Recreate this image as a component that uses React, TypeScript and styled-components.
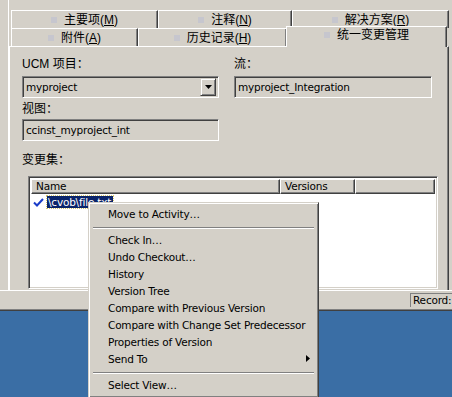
import React from "react";
import styled, { createGlobalStyle, css } from "styled-components";

const GlobalStyle = createGlobalStyle`
  html, body { margin: 0; padding: 0; }
  body {
    width: 452px;
    height: 397px;
    overflow: hidden;
    background: #3a6ea5;
    font-family: "Liberation Sans", "Noto Sans CJK SC", sans-serif;
    font-size: 12px;
    color: #000;
  }
`;

const Screen = styled.div`
  position: relative;
  width: 452px;
  height: 397px;
  overflow: hidden;
  background: #3a6ea5;
`;

const AppWindow = styled.div`
  height: 311px;
  box-sizing: border-box;
  background: #d4d0c8;
  border-bottom: 1px solid #404040;
  box-shadow: inset 0 -1px 0 #808080;
  display: flex;
  flex-direction: column;
`;

const Workspace = styled.div`
  height: 290px;
  display: flex;
  padding-left: 8px;
`;

const TabControl = styled.div`
  flex: 1;
  display: flex;
  flex-direction: column;
  border-left: 1px solid #ffffff;
  padding-top: 10px;
`;

const TabRow = styled.div<{ $front?: boolean }>`
  display: flex;
  height: 18px;
  padding-left: 2px;
  position: relative;
  z-index: ${(p) => (p.$front ? 2 : 1)};
`;

const Tab = styled.div<{ $w: number; $selected?: boolean }>`
  width: ${(p) => p.$w}px;
  flex: none;
  box-sizing: border-box;
  display: flex;
  align-items: center;
  justify-content: center;
  gap: 7px;
  background: #d4d0c8;
  border-top: 1px solid #ffffff;
  border-left: 1px solid #ffffff;
  border-right: 1px solid #404040;
  box-shadow: inset -1px 0 0 #808080;
  font-family: "Liberation Sans", "Noto Sans CJK SC", sans-serif;
  font-size: 12px;
  line-height: 14px;
  padding-top: 1px;
  ${(p) =>
    p.$selected &&
    css`
      height: 21px;
      margin-top: -2px;
      margin-left: -1px;
      margin-right: -2px;
      padding-top: 0;
      padding-bottom: 4px;
      position: relative;
      z-index: 3;
    `}
`;

const TabIcon = styled.span`
  width: 6px;
  height: 6px;
  background: #c6c6ce;
  flex: none;
`;

const Key = styled.u`
  text-decoration: underline;
  text-underline-offset: 1px;
`;

const TabPage = styled.div`
  flex: 1;
  display: flex;
  flex-direction: column;
  margin-right: 3px;
  border-top: 1px solid #ffffff;
  border-left: 1px solid #ffffff;
  border-right: 1px solid #404040;
  box-shadow: inset -1px 0 0 #808080;
  padding: 10px 0 0 12px;
  position: relative;
  z-index: 1;
`;

const FieldGrid = styled.div`
  display: grid;
  grid-template-columns: 197px 198px;
  column-gap: 15px;
`;

const Field = styled.div<{ $gap?: number }>`
  display: flex;
  flex-direction: column;
  margin-bottom: ${(p) => p.$gap ?? 0}px;
`;

const Label = styled.div<{ $mb?: number; $mt?: number }>`
  font-family: "Liberation Sans", "Noto Sans CJK SC", sans-serif;
  font-size: 12px;
  line-height: 14px;
  height: 14px;
  margin-top: ${(p) => p.$mt ?? 0}px;
  margin-bottom: ${(p) => p.$mb ?? 5}px;
`;

const sunken = css`
  border-top: 1px solid #808080;
  border-left: 1px solid #808080;
  border-bottom: 1px solid #ffffff;
  border-right: 1px solid #ffffff;
  box-shadow: inset 1px 1px 0 #404040, inset -1px -1px 0 #d4d0c8;
`;

const TextBox = styled.div`
  ${sunken};
  height: 22px;
  box-sizing: border-box;
  display: flex;
  align-items: center;
  padding-left: 3px;
  background: #d4d0c8;
  font-family: "DejaVu Sans", sans-serif;
  font-size: 10.5px;
  letter-spacing: -0.2px;
`;

const ComboBox = styled(TextBox)`
  padding-right: 2px;
  justify-content: space-between;
`;

const DropButton = styled.div`
  width: 16px;
  height: 18px;
  box-sizing: border-box;
  background: #d4d0c8;
  border-top: 1px solid #d4d0c8;
  border-left: 1px solid #d4d0c8;
  border-right: 1px solid #404040;
  border-bottom: 1px solid #404040;
  box-shadow: inset 1px 1px 0 #ffffff, inset -1px -1px 0 #808080;
  display: flex;
  align-items: center;
  justify-content: center;
`;

const ListView = styled.div`
  ${sunken};
  margin-top: 9px;
  margin-left: 6px;
  width: 410px;
  height: 113px;
  box-sizing: border-box;
  background: #ffffff;
  display: flex;
  flex-direction: column;
  padding: 2px;
`;

const HeaderRow = styled.div`
  display: flex;
  height: 15px;
  flex: none;
`;

const HeaderCell = styled.div<{ $w?: number }>`
  ${(p) => (p.$w ? css`width: ${p.$w}px; flex: none;` : css`flex: 1;`)}
  box-sizing: border-box;
  background: #d4d0c8;
  border-top: 1px solid #ffffff;
  border-left: 1px solid #ffffff;
  border-right: 1px solid #404040;
  border-bottom: 1px solid #404040;
  box-shadow: inset -1px -1px 0 #808080;
  font-family: "DejaVu Sans", sans-serif;
  font-size: 10.5px;
  letter-spacing: -0.2px;
  line-height: 12px;
  padding-left: 4px;
  white-space: nowrap;
  overflow: hidden;
`;

const ListRow = styled.div`
  display: flex;
  align-items: center;
  height: 14px;
  padding-left: 2px;
  margin-top: 1px;
  gap: 3px;
`;

const SelectedText = styled.span`
  background: #0a246a;
  color: #ffffff;
  font-family: "DejaVu Sans", sans-serif;
  font-size: 10.5px;
  letter-spacing: -0.2px;
  line-height: 12px;
  padding: 0 2px 0 1px;
  outline: 1px dotted #d4c46a;
`;

const StatusBar = styled.div`
  flex: 1;
  display: flex;
  justify-content: flex-end;
  align-items: flex-start;
  padding-top: 2px;
  border-top: 1px solid #ffffff;
`;

const StatusCell = styled.div`
  border-top: 1px solid #808080;
  border-left: 1px solid #808080;
  height: 14px;
  width: 42px;
  box-sizing: border-box;
  padding-left: 2px;
  font-family: "DejaVu Sans", sans-serif;
  font-size: 10.5px;
  letter-spacing: -0.2px;
  line-height: 13px;
  white-space: nowrap;
  overflow: hidden;
`;

const Menu = styled.div`
  position: absolute;
  left: 88px;
  top: 202px;
  width: 231px;
  box-sizing: border-box;
  padding: 3px;
  background: #d4d0c8;
  border-top: 1px solid #d4d0c8;
  border-left: 1px solid #d4d0c8;
  border-right: 1px solid #404040;
  border-bottom: 1px solid #404040;
  box-shadow: inset 1px 1px 0 #ffffff, inset -1px -1px 0 #808080;
  z-index: 10;
  font-family: "DejaVu Sans", sans-serif;
  font-size: 10.5px;
  letter-spacing: -0.2px;
`;

const MenuItem = styled.div`
  height: 17px;
  box-sizing: border-box;
  display: flex;
  align-items: center;
  justify-content: space-between;
  padding: 0 5px 2px 16px;
  white-space: nowrap;
`;

const Separator = styled.div`
  height: 9px;
  display: flex;
  align-items: center;
  &::after {
    content: "";
    flex: 1;
    margin: 0 1px;
    border-top: 1px solid #808080;
    border-bottom: 1px solid #ffffff;
    height: 0;
  }
`;

const menuItems: (string | null)[] = [
  "Move to Activity…",
  null,
  "Check In…",
  "Undo Checkout…",
  "History",
  "Version Tree",
  "Compare with Previous Version",
  "Compare with Change Set Predecessor",
  "Properties of Version",
  "Send To",
  null,
  "Select View…",
];

const TabLabel: React.FC<{ text: string; k?: string }> = ({ text, k }) => (
  <>
    <TabIcon />
    <span>
      {text}
      {k && (
        <>
          (<Key>{k}</Key>)
        </>
      )}
    </span>
  </>
);

export default function App() {
  return (
    <Screen>
      <GlobalStyle />
      <AppWindow>
        <Workspace>
          <TabControl>
            <TabRow>
              <Tab $w={147}>
                <TabLabel text="主要项" k="M" />
              </Tab>
              <Tab $w={134}>
                <TabLabel text="注释" k="N" />
              </Tab>
              <Tab $w={157}>
                <TabLabel text="解决方案" k="R" />
              </Tab>
            </TabRow>
            <TabRow $front>
              <Tab $w={127}>
                <TabLabel text="附件" k="A" />
              </Tab>
              <Tab $w={149}>
                <TabLabel text="历史记录" k="H" />
              </Tab>
              <Tab $w={161} $selected>
                <TabLabel text="统一变更管理" />
              </Tab>
            </TabRow>
            <TabPage>
              <FieldGrid>
                <div>
                  <Field $gap={4}>
                    <Label>UCM 项目：</Label>
                    <ComboBox>
                      <span>myproject</span>
                      <DropButton>
                        <svg width="7" height="4" viewBox="0 0 7 4">
                          <path d="M0 0h7L3.5 4z" fill="#000" />
                        </svg>
                      </DropButton>
                    </ComboBox>
                  </Field>
                  <Field>
                    <Label $mb={3}>视图：</Label>
                    <TextBox>ccinst_myproject_int</TextBox>
                  </Field>
                </div>
                <div>
                  <Field>
                    <Label>流：</Label>
                    <TextBox>myproject_Integration</TextBox>
                  </Field>
                </div>
              </FieldGrid>
              <Label $mb={0} $mt={12}>
                变更集：
              </Label>
              <ListView>
                <HeaderRow>
                  <HeaderCell $w={249}>Name</HeaderCell>
                  <HeaderCell $w={75}>Versions</HeaderCell>
                  <HeaderCell />
                </HeaderRow>
                <ListRow>
                  <svg width="11" height="9" viewBox="0 0 11 9">
                    <path d="M1 4.5l3 3L10 1" stroke="#1a3cc8" strokeWidth="2" fill="none" />
                  </svg>
                  <SelectedText>\cvob\file.txt</SelectedText>
                </ListRow>
              </ListView>
            </TabPage>
          </TabControl>
        </Workspace>
        <StatusBar>
          <StatusCell>Record:</StatusCell>
        </StatusBar>
      </AppWindow>
      <Menu>
        {menuItems.map((m, i) =>
          m === null ? (
            <Separator key={i} />
          ) : (
            <MenuItem key={i}>
              <span>{m}</span>
              {m === "Send To" && (
                <svg width="4" height="7" viewBox="0 0 4 7">
                  <path d="M0 0l4 3.5L0 7z" fill="#000" />
                </svg>
              )}
            </MenuItem>
          )
        )}
      </Menu>
    </Screen>
  );
}
